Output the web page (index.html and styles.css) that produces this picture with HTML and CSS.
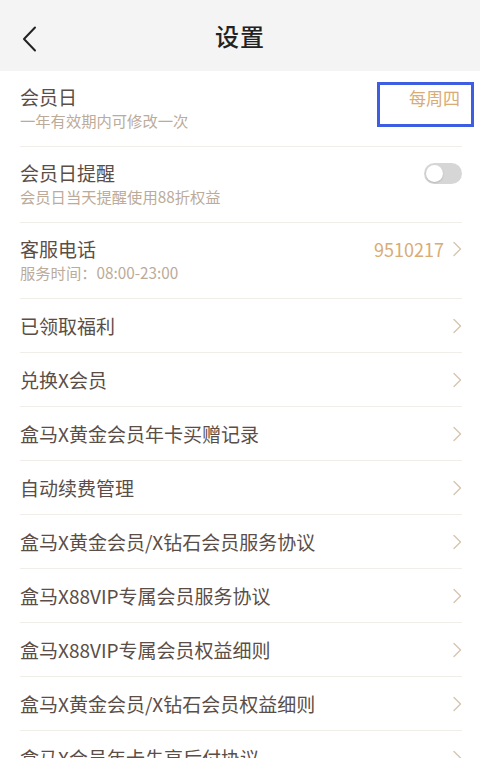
FILE: index.html
```html
<!DOCTYPE html>
<html lang="zh-CN">
<head>
<meta charset="utf-8">
<title>设置</title>
<link rel="stylesheet" href="styles.css">
</head>
<body>
<header class="nav">
  <svg class="back" width="16" height="26" viewBox="0 0 16 26"><polyline points="13,1.5 2,13 13,24.5" fill="none" stroke="#222" stroke-width="2" stroke-linecap="round" stroke-linejoin="round"/></svg>
  <h1 class="nav-title">设置</h1>
</header>
<main class="list">
  <div class="row row-tall">
    <div class="texts">
      <div class="title">会员日</div>
      <div class="sub">一年有效期内可修改一次</div>
    </div>
    <span class="value value-boxed">每周四</span>
  </div>
  <div class="row row-tall">
    <div class="texts">
      <div class="title">会员日提醒</div>
      <div class="sub">会员日当天提醒使用88折权益</div>
    </div>
    <span class="toggle"><span class="knob"></span></span>
  </div>
  <div class="row row-tall">
    <div class="texts">
      <div class="title">客服电话</div>
      <div class="sub">服务时间：08:00-23:00</div>
    </div>
    <span class="right"><span class="value num">9510217</span><svg class="chev" width="10" height="16" viewBox="0 0 10 16"><polyline points="2,1.5 8.5,8 2,14.5" fill="none" stroke="#d6c5b0" stroke-width="1.4" stroke-linecap="round" stroke-linejoin="round"/></svg></span>
  </div>
  <div class="row"><div class="title">已领取福利</div><svg class="chev" width="10" height="16" viewBox="0 0 10 16"><polyline points="2,1.5 8.5,8 2,14.5" fill="none" stroke="#d6c5b0" stroke-width="1.4" stroke-linecap="round" stroke-linejoin="round"/></svg></div>
  <div class="row"><div class="title">兑换X会员</div><svg class="chev" width="10" height="16" viewBox="0 0 10 16"><polyline points="2,1.5 8.5,8 2,14.5" fill="none" stroke="#d6c5b0" stroke-width="1.4" stroke-linecap="round" stroke-linejoin="round"/></svg></div>
  <div class="row"><div class="title">盒马X黄金会员年卡买赠记录</div><svg class="chev" width="10" height="16" viewBox="0 0 10 16"><polyline points="2,1.5 8.5,8 2,14.5" fill="none" stroke="#d6c5b0" stroke-width="1.4" stroke-linecap="round" stroke-linejoin="round"/></svg></div>
  <div class="row"><div class="title">自动续费管理</div><svg class="chev" width="10" height="16" viewBox="0 0 10 16"><polyline points="2,1.5 8.5,8 2,14.5" fill="none" stroke="#d6c5b0" stroke-width="1.4" stroke-linecap="round" stroke-linejoin="round"/></svg></div>
  <div class="row"><div class="title">盒马X黄金会员/X钻石会员服务协议</div><svg class="chev" width="10" height="16" viewBox="0 0 10 16"><polyline points="2,1.5 8.5,8 2,14.5" fill="none" stroke="#d6c5b0" stroke-width="1.4" stroke-linecap="round" stroke-linejoin="round"/></svg></div>
  <div class="row"><div class="title">盒马X88VIP专属会员服务协议</div><svg class="chev" width="10" height="16" viewBox="0 0 10 16"><polyline points="2,1.5 8.5,8 2,14.5" fill="none" stroke="#d6c5b0" stroke-width="1.4" stroke-linecap="round" stroke-linejoin="round"/></svg></div>
  <div class="row"><div class="title">盒马X88VIP专属会员权益细则</div><svg class="chev" width="10" height="16" viewBox="0 0 10 16"><polyline points="2,1.5 8.5,8 2,14.5" fill="none" stroke="#d6c5b0" stroke-width="1.4" stroke-linecap="round" stroke-linejoin="round"/></svg></div>
  <div class="row"><div class="title">盒马X黄金会员/X钻石会员权益细则</div><svg class="chev" width="10" height="16" viewBox="0 0 10 16"><polyline points="2,1.5 8.5,8 2,14.5" fill="none" stroke="#d6c5b0" stroke-width="1.4" stroke-linecap="round" stroke-linejoin="round"/></svg></div>
  <div class="row"><div class="title">盒马X会员年卡先享后付协议</div><svg class="chev" width="10" height="16" viewBox="0 0 10 16"><polyline points="2,1.5 8.5,8 2,14.5" fill="none" stroke="#d6c5b0" stroke-width="1.4" stroke-linecap="round" stroke-linejoin="round"/></svg></div>
</main>
</body>
</html>
```
FILE: styles.css
```css
html, body {
  margin: 0;
  padding: 0;
  background: #ffffff;
  font-family: "Noto Sans CJK SC", "Noto Sans", sans-serif;
}
.nav {
  height: 71px;
  background: #f4f4f4;
  display: flex;
  align-items: center;
  justify-content: center;
  position: relative;
}
.back {
  position: absolute;
  left: 22px;
  top: 26px;
}
.nav-title {
  margin: 0;
  font-size: 24px;
  font-weight: 500;
  color: #222222;
  line-height: 30px;
  letter-spacing: 1px;
}
.list {
  padding: 0 18px 0 20px;
}
.row {
  height: 53px;
  border-bottom: 1px solid #f1ede9;
  display: flex;
  align-items: center;
  justify-content: space-between;
  position: relative;
}
.row-tall {
  height: auto;
  padding: 13px 0 15px;
  align-items: flex-start;
}
.texts {
  display: flex;
  flex-direction: column;
}
.title {
  font-size: 19px;
  line-height: 26px;
  color: #5a4e47;
}
.sub {
  font-size: 15.3px;
  line-height: 21px;
  color: #bcab99;
}
.value {
  font-size: 17px;
  line-height: 24px;
  color: #d8ac74;
}
.num {
  font-size: 18px;
  margin-right: 8px;
}
.value-boxed {
  position: absolute;
  right: -12px;
  top: 11px;
  width: 80px;
  height: 38px;
  padding: 1px 11px 0 0;
  border: 3px solid #3d5ee0;
  text-align: right;
}
.right {
  display: flex;
  align-items: center;
  height: 26px;
}
.chev {
  display: block;
}
.toggle {
  margin-top: 3px;
  width: 38px;
  height: 21px;
  border-radius: 11px;
  background: #d6d6d6;
  position: relative;
  display: block;
}
.knob {
  position: absolute;
  left: 2px;
  top: 2px;
  width: 17px;
  height: 17px;
  border-radius: 50%;
  background: #ffffff;
  box-shadow: 0 1px 2px rgba(0,0,0,0.15);
}
```
